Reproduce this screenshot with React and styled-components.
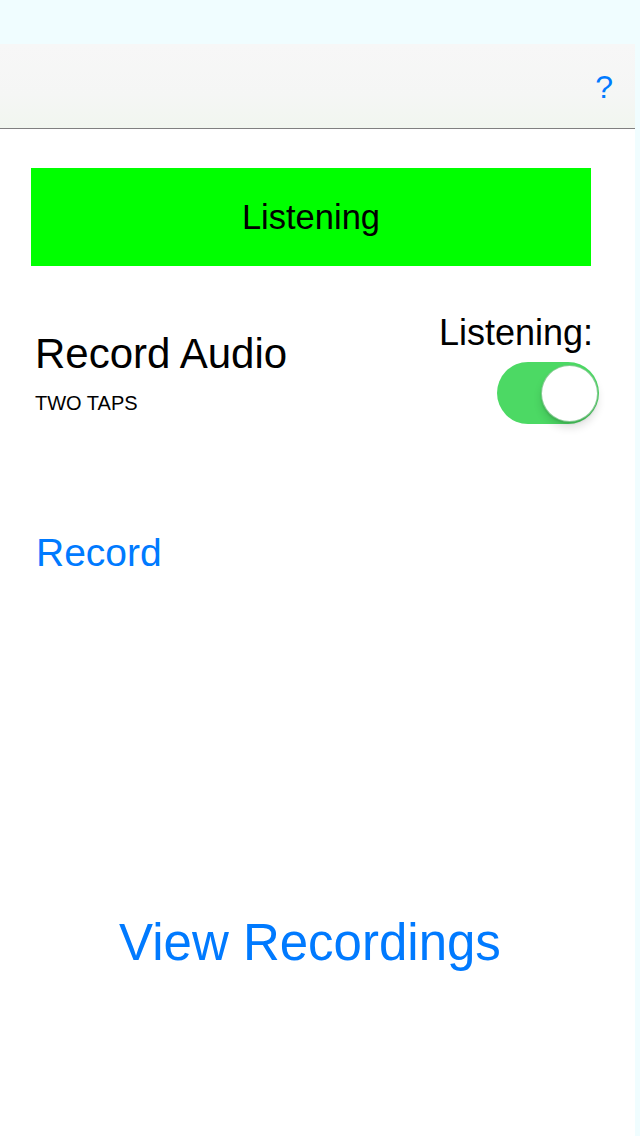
import React from 'react'
import styled, { createGlobalStyle } from 'styled-components'

const GlobalStyle = createGlobalStyle`
  html, body {
    margin: 0;
    padding: 0;
    background: #f0fdff;
  }
  body {
    font-family: "Liberation Sans", Arial, sans-serif;
  }
`

const Screen = styled.div`
  width: 640px;
  height: 1136px;
  display: flex;
  flex-direction: column;
  background: #f0fdff;
  overflow: hidden;
`

const StatusBar = styled.div`
  height: 44px;
  flex-shrink: 0;
`

const Body = styled.div`
  flex: 1;
  display: flex;
`

const Main = styled.div`
  width: 635px;
  display: flex;
  flex-direction: column;
  background: #ffffff;
`

const NavBar = styled.div`
  height: 84px;
  border-bottom: 1px solid #808080;
  background: linear-gradient(180deg, #f7f7f7 0%, #f5f6f5 60%, #f1f6ef 100%);
  display: flex;
  align-items: center;
  justify-content: flex-end;
  padding-right: 22px;
`

const HelpButton = styled.button`
  border: 0;
  background: none;
  padding: 0;
  margin-top: 2px;
  font-family: "Liberation Sans", Arial, sans-serif;
  font-size: 32px;
  line-height: 36px;
  color: #007aff;
`

const Content = styled.div`
  display: flex;
  flex-direction: column;
`

const StatusBox = styled.div`
  margin: 39px 0 0 31px;
  width: 560px;
  height: 98px;
  background: #00ff00;
  display: flex;
  align-items: center;
  justify-content: center;
  font-size: 34.5px;
  color: #000;
`

const Row = styled.div`
  margin-top: 47px;
  display: flex;
  justify-content: space-between;
  align-items: flex-start;
  padding: 0 36px 0 35px;
`

const LeftCol = styled.div`
  margin-top: 17px;
  display: flex;
  flex-direction: column;
`

const Title = styled.div`
  font-size: 42px;
  line-height: 48px;
  color: #000;
`

const Subtitle = styled.div`
  margin-top: 14px;
  font-size: 20px;
  line-height: 22px;
  color: #000;
`

const RightCol = styled.div`
  display: flex;
  flex-direction: column;
  align-items: flex-end;
`

const SwitchLabel = styled.div`
  font-size: 36px;
  line-height: 40px;
  margin-right: 6px;
  color: #000;
`

const Track = styled.div`
  margin-top: 9px;
  width: 102px;
  height: 62px;
  border-radius: 31px;
  background: ${p => (p.on ? '#4cd964' : '#e5e5e5')};
  display: flex;
  align-items: center;
  justify-content: ${p => (p.on ? 'flex-end' : 'flex-start')};
  padding: 0 1px;
  box-sizing: border-box;
`

const Knob = styled.div`
  width: 57px;
  height: 57px;
  border-radius: 50%;
  background: #ffffff;
  box-shadow: 0 6px 8px rgba(0, 0, 0, 0.12), 0 2px 2px rgba(0, 0, 0, 0.1);
  border: 1px solid rgba(60, 170, 80, 0.6);
  box-sizing: border-box;
`

const LinkButton = styled.button`
  border: 0;
  background: none;
  padding: 0;
  font-family: "Liberation Sans", Arial, sans-serif;
  color: #007aff;
  font-size: ${p => p.size}px;
  line-height: ${p => p.lh}px;
`

const RecordWrap = styled.div`
  margin-top: 107px;
  padding-left: 36px;
  display: flex;
`

const ViewWrap = styled.div`
  margin-top: 338px;
  display: flex;
  justify-content: center;
  padding-right: 15px;
`

const Strip = styled.div`
  flex: 1;
`

export default function App() {
  return (
    <Screen>
      <GlobalStyle />
      <StatusBar />
      <Body>
        <Main>
          <NavBar>
            <HelpButton>?</HelpButton>
          </NavBar>
          <Content>
            <StatusBox>Listening</StatusBox>
            <Row>
              <LeftCol>
                <Title>Record Audio</Title>
                <Subtitle>TWO TAPS</Subtitle>
              </LeftCol>
              <RightCol>
                <SwitchLabel>Listening:</SwitchLabel>
                <Track on>
                  <Knob />
                </Track>
              </RightCol>
            </Row>
            <RecordWrap>
              <LinkButton size={39} lh={44}>Record</LinkButton>
            </RecordWrap>
            <ViewWrap>
              <LinkButton size={51} lh={60}>View Recordings</LinkButton>
            </ViewWrap>
          </Content>
        </Main>
        <Strip />
      </Body>
    </Screen>
  )
}
